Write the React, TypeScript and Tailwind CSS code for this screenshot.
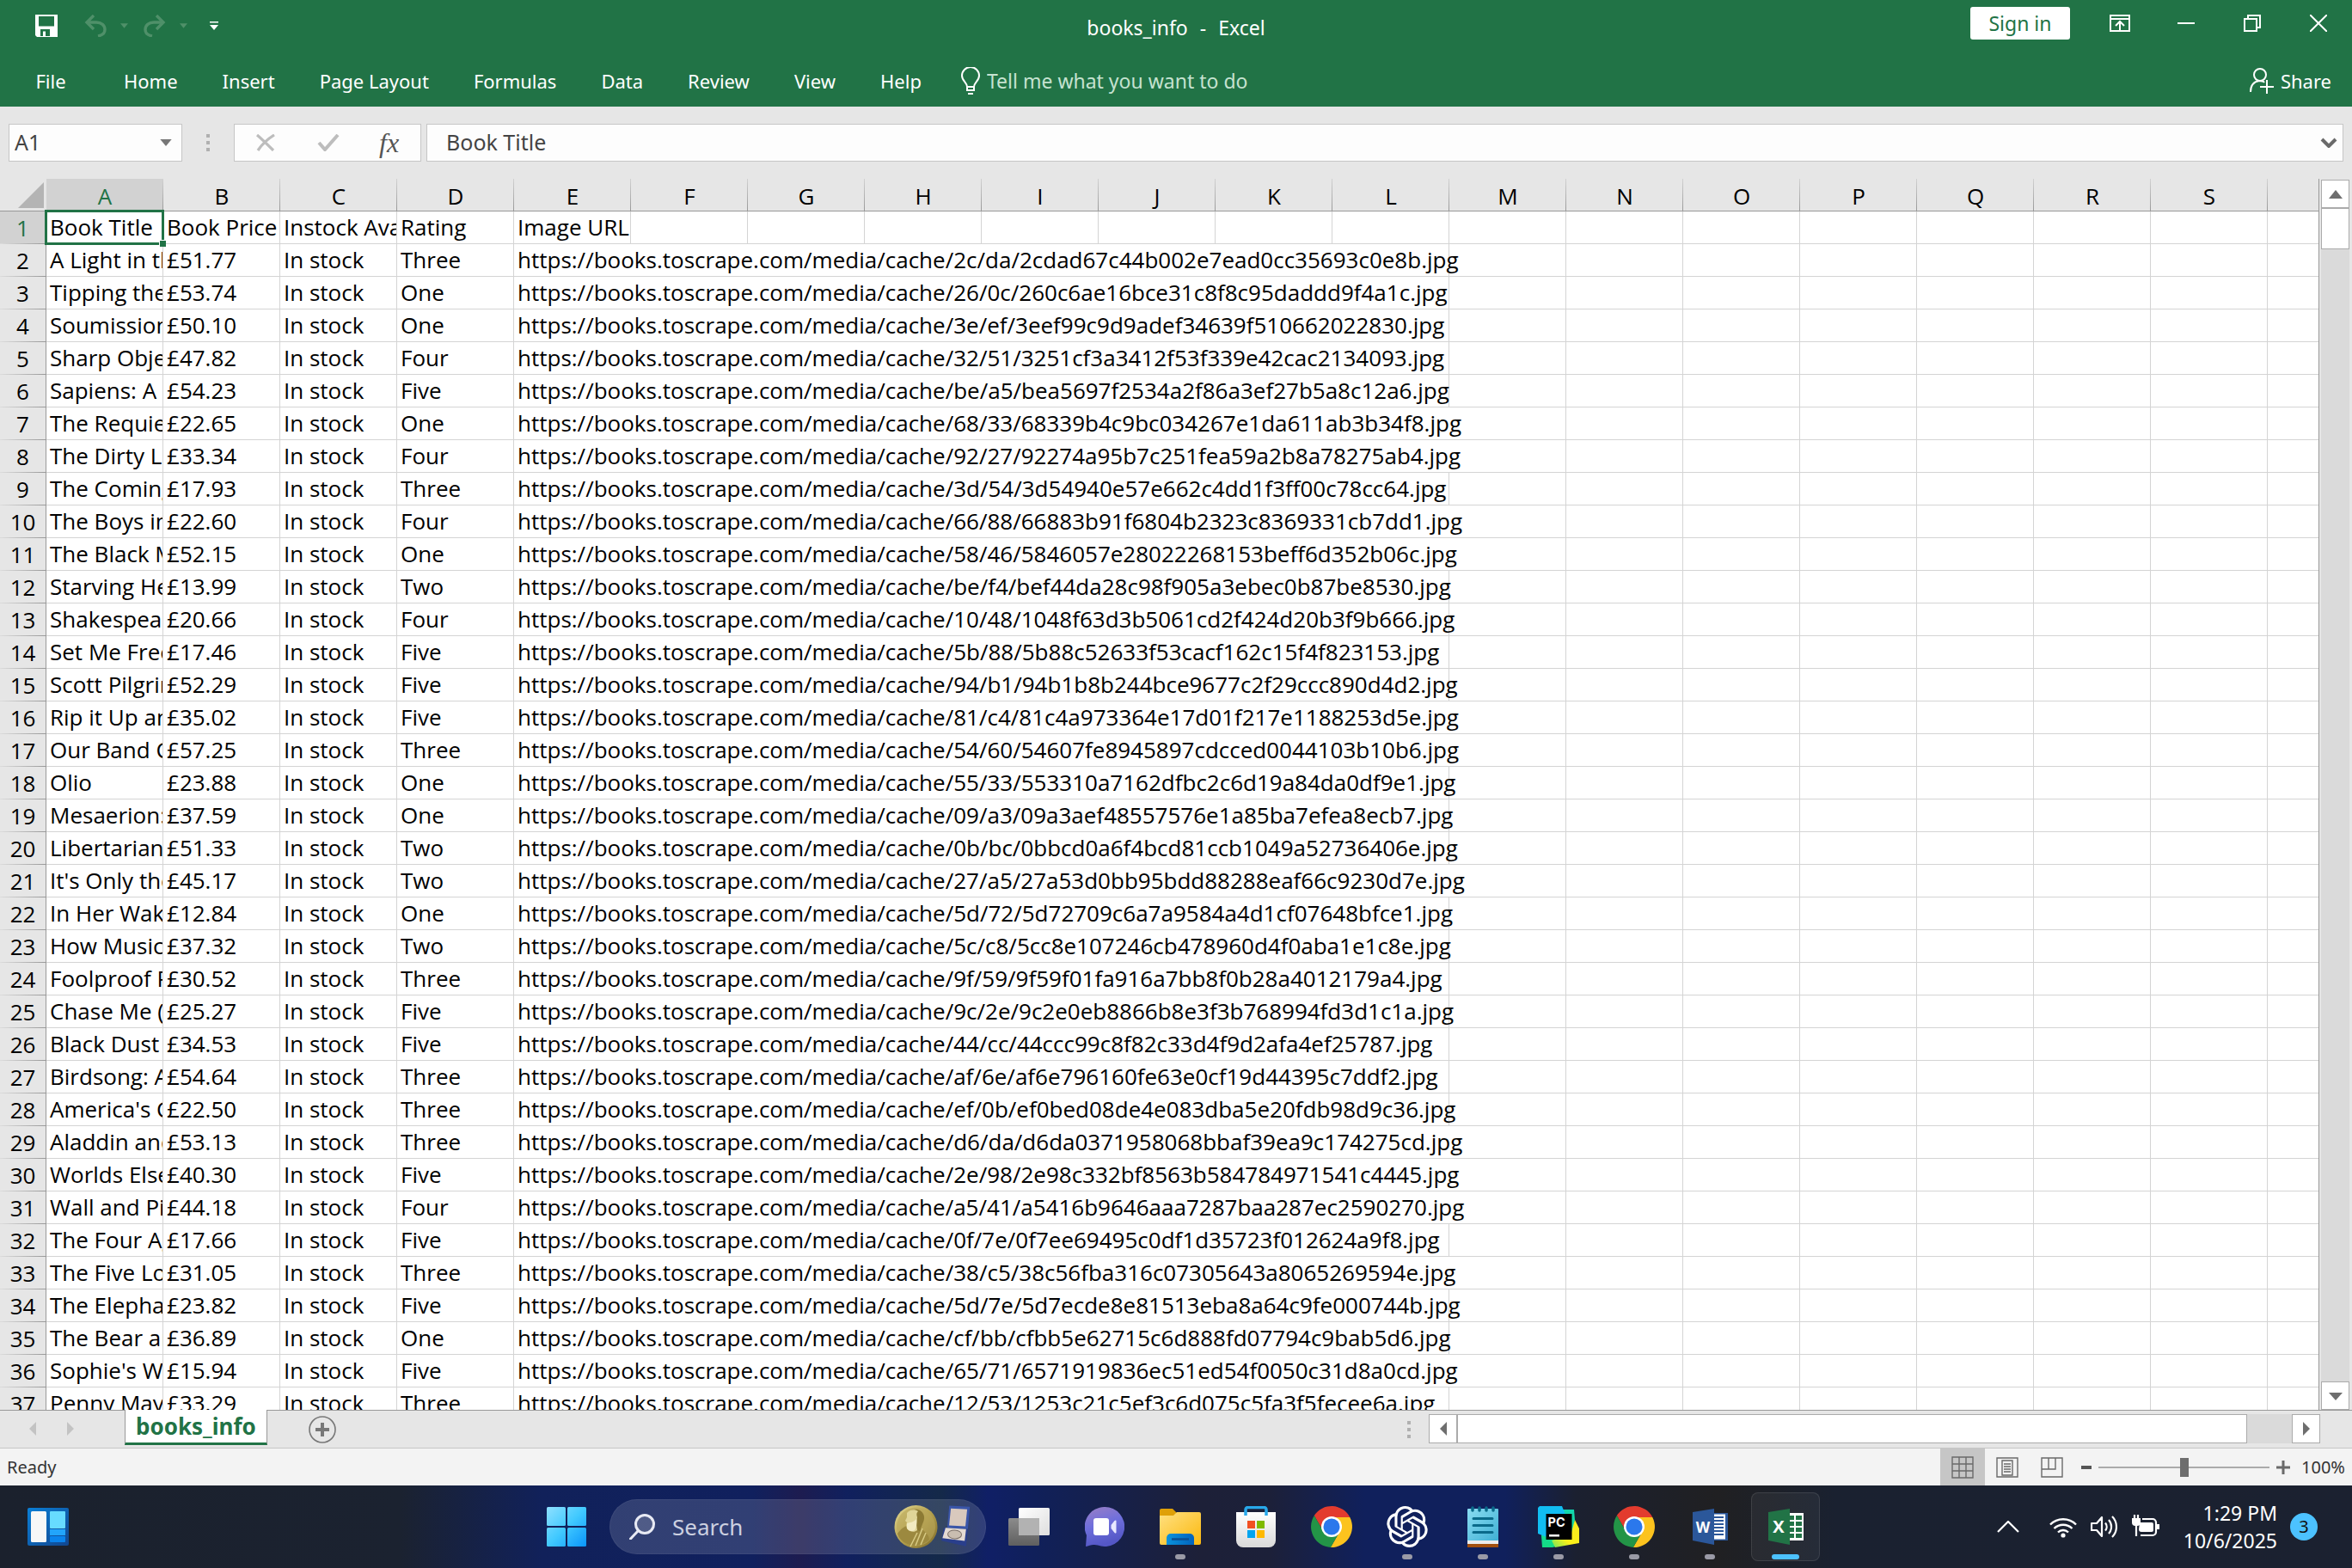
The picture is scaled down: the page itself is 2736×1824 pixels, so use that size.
import type { ReactNode } from "react";
import { SiOpenai } from "react-icons/si";

const UI = "font-['Noto_Sans','Open_Sans',sans-serif]";
const SHEET = "font-['Open_Sans','Noto_Sans',sans-serif]";

const menuTabs = ["Home", "Insert", "Page Layout", "Formulas", "Data", "Review", "View", "Help"];
const columns = "ABCDEFGHIJKLMNOPQRS".split("");
const TOTAL_COLUMNS = columns.length + 1;

type Book = { title: string; price: string; rating: string; image: string; span: number };

const book = (title: string, price: string, rating: string, image: string, span = 8): Book => ({
  title,
  price,
  rating,
  image,
  span,
});

const books: Book[] = [
  book("A Light in the", "51.77", "Three", "2c/da/2cdad67c44b002e7ead0cc35693c0e8b"),
  book("Tipping the", "53.74", "One", "26/0c/260c6ae16bce31c8f8c95daddd9f4a1c"),
  book("Soumission", "50.10", "One", "3e/ef/3eef99c9d9adef34639f510662022830"),
  book("Sharp Objects", "47.82", "Four", "32/51/3251cf3a3412f53f339e42cac2134093"),
  book("Sapiens: A Brief", "54.23", "Five", "be/a5/bea5697f2534a2f86a3ef27b5a8c12a6"),
  book("The Requiem", "22.65", "One", "68/33/68339b4c9bc034267e1da611ab3b34f8", 9),
  book("The Dirty Little", "33.34", "Four", "92/27/92274a95b7c251fea59a2b8a78275ab4", 9),
  book("The Coming", "17.93", "Three", "3d/54/3d54940e57e662c4dd1f3ff00c78cc64"),
  book("The Boys in", "22.60", "Four", "66/88/66883b91f6804b2323c8369331cb7dd1", 9),
  book("The Black Maria", "52.15", "One", "58/46/5846057e28022268153beff6d352b06c", 9),
  book("Starving Hearts", "13.99", "Two", "be/f4/bef44da28c98f905a3ebec0b87be8530"),
  book("Shakespeare's", "20.66", "Four", "10/48/1048f63d3b5061cd2f424d20b3f9b666"),
  book("Set Me Free", "17.46", "Five", "5b/88/5b88c52633f53cacf162c15f4f823153"),
  book("Scott Pilgrim's", "52.29", "Five", "94/b1/94b1b8b244bce9677c2f29ccc890d4d2"),
  book("Rip it Up and", "35.02", "Five", "81/c4/81c4a973364e17d01f217e1188253d5e", 9),
  book("Our Band Could", "57.25", "Three", "54/60/54607fe8945897cdcced0044103b10b6", 9),
  book("Olio", "23.88", "One", "55/33/553310a7162dfbc2c6d19a84da0df9e1"),
  book("Mesaerion:", "37.59", "One", "09/a3/09a3aef48557576e1a85ba7efea8ecb7"),
  book("Libertarianism", "51.33", "Two", "0b/bc/0bbcd0a6f4bcd81ccb1049a52736406e"),
  book("It's Only the", "45.17", "Two", "27/a5/27a53d0bb95bdd88288eaf66c9230d7e", 9),
  book("In Her Wake", "12.84", "One", "5d/72/5d72709c6a7a9584a4d1cf07648bfce1"),
  book("How Music", "37.32", "Two", "5c/c8/5cc8e107246cb478960d4f0aba1e1c8e"),
  book("Foolproof Preserving", "30.52", "Three", "9f/59/9f59f01fa916a7bb8f0b28a4012179a4"),
  book("Chase Me (Paris", "25.27", "Five", "9c/2e/9c2e0eb8866b8e3f3b768994fd3d1c1a"),
  book("Black Dust", "34.53", "Five", "44/cc/44ccc99c8f82c33d4f9d2afa4ef25787"),
  book("Birdsong: A", "54.64", "Three", "af/6e/af6e796160fe63e0cf19d44395c7ddf2"),
  book("America's Cradle", "22.50", "Three", "ef/0b/ef0bed08de4e083dba5e20fdb98d9c36"),
  book("Aladdin and", "53.13", "Three", "d6/da/d6da0371958068bbaf39ea9c174275cd", 9),
  book("Worlds Elsewhere", "40.30", "Five", "2e/98/2e98c332bf8563b584784971541c4445", 9),
  book("Wall and Piece", "44.18", "Four", "a5/41/a5416b9646aaa7287baa287ec2590270", 9),
  book("The Four Agreements", "17.66", "Five", "0f/7e/0f7ee69495c0df1d35723f012624a9f8"),
  book("The Five Love", "31.05", "Three", "38/c5/38c56fba316c07305643a8065269594e", 9),
  book("The Elephant", "23.82", "Five", "5d/7e/5d7ecde8e81513eba8a64c9fe000744b"),
  book("The Bear and", "36.89", "One", "cf/bb/cfbb5e62715c6d888fd07794c9bab5d6"),
  book("Sophie's World", "15.94", "Five", "65/71/6571919836ec51ed54f0050c31d8a0cd", 9),
  book("Penny Maybe", "33.29", "Three", "12/53/1253c21c5ef3c6d075c5fa3f5fecee6a"),
];

/* ---------- Title bar and ribbon ---------- */

function CaretDown({ className }: { className: string }) {
  return (
    <svg viewBox="0 0 10 6" className={className} fill="currentColor" aria-hidden="true">
      <path d="M0 0h10L5 6z" />
    </svg>
  );
}

function UndoShape({ className }: { className: string }) {
  return (
    <svg viewBox="0 0 26 26" className={className} fill="none" stroke="currentColor" strokeWidth="3.4" aria-hidden="true">
      <path d="M11 1 3 9l8 8" />
      <path d="M3 9h11c6 0 10 3.500 10 8.500 0 4-3 6.500-8 7.500" />
    </svg>
  );
}

function TitleBar() {
  return (
    <div className="grid h-16 grid-cols-[1fr_auto_1fr]">
      <div className="flex h-15 items-center pl-[41px] text-white">
        <button aria-label="Save">
          <svg viewBox="0 0 26 26" className="size-[26px]" aria-hidden="true">
            <path fill="#fff" fillRule="evenodd" d="M0 0h26v26H2l-2-2zM4 2v11.500h18V2zM6 17v8h3v-5.500h3V25h5v-8z" />
          </svg>
        </button>
        <button aria-label="Undo" disabled className="ml-[31px] text-[#4f9069]">
          <UndoShape className="size-[26px]" />
        </button>
        <button aria-label="Undo history" disabled className="ml-4 text-[#4f9069]">
          <CaretDown className="h-[6px] w-[9px]" />
        </button>
        <button aria-label="Redo" disabled className="ml-[18px] text-[#4f9069]">
          <UndoShape className="size-[26px] -scale-x-100" />
        </button>
        <button aria-label="Redo history" disabled className="ml-4 text-[#4f9069]">
          <CaretDown className="h-[6px] w-[9px]" />
        </button>
        <button aria-label="Customize Quick Access Toolbar" className="ml-[26px]">
          <svg viewBox="0 0 10 10" className="size-[10px]" fill="currentColor" aria-hidden="true">
            <path d="M0 0h10v1.500H0zM0 4h10L5 10z" />
          </svg>
        </button>
      </div>
      <h1 className="flex items-center gap-[14px] text-[23px] text-white">
        <span>books_info</span>
        <span>-</span>
        <span>Excel</span>
      </h1>
      <div className="flex h-[54px] items-center justify-end pr-[29px] text-white">
        <button className="h-[38px] w-[116px] rounded-[3px] bg-white text-[23px] text-[#217346]">Sign in</button>
        <button aria-label="Ribbon Display Options" className="ml-[46px]">
          <svg viewBox="0 0 24 20" className="h-5 w-6" fill="none" stroke="currentColor" strokeWidth="2" aria-hidden="true">
            <path d="M1 1h22v18H1zM1 5h22M12 19V8M7 13l5-5 5 5" />
          </svg>
        </button>
        <button aria-label="Minimize" className="ml-[55px]">
          <svg viewBox="0 0 20 20" className="size-5" stroke="currentColor" strokeWidth="2" aria-hidden="true">
            <path d="M0 10h20" />
          </svg>
        </button>
        <button aria-label="Restore" className="ml-[57px]">
          <svg viewBox="0 0 20 20" className="size-5" fill="none" stroke="currentColor" strokeWidth="2" aria-hidden="true">
            <path d="M1 5h14v14H1zM5 5V1h14v14h-4" />
          </svg>
        </button>
        <button aria-label="Close" className="ml-[57px]">
          <svg viewBox="0 0 20 20" className="size-5" stroke="currentColor" strokeWidth="2" aria-hidden="true">
            <path d="M0 0l20 20M20 0L0 20" />
          </svg>
        </button>
      </div>
    </div>
  );
}

function MenuBar() {
  return (
    <nav className="flex h-15 items-center text-[22px] text-white">
      <button className="h-full w-[118px]">File</button>
      {menuTabs.map((tab) => (
        <button key={tab} className="h-full px-[26px]">
          {tab}
        </button>
      ))}
      <label className="ml-5 flex flex-1 items-center gap-2">
        <svg viewBox="0 0 22 32" className="h-8 w-[22px]" fill="none" stroke="#fff" strokeWidth="2" aria-hidden="true">
          <path d="M7 23c0-5-6-7-6-13a10 10 0 0 1 20 0c0 6-6 8-6 13zM7 23v4h8v-4M8 31h6" />
        </svg>
        <input
          aria-label="Tell me what you want to do"
          placeholder="Tell me what you want to do"
          className="w-[400px] bg-transparent text-[23px] outline-none placeholder:text-[#c5e2d0]"
        />
      </label>
      <button className="mr-6 flex items-center gap-2">
        <svg viewBox="0 0 28 30" className="h-[30px] w-7" fill="none" stroke="currentColor" strokeWidth="2" aria-hidden="true">
          <ellipse cx="12" cy="8" rx="7" ry="7" />
          <path d="M1 28c0-8 4-12 10-13 3 0 5 .5 6 2M20 14v16M12 22h16" />
        </svg>
        Share
      </button>
    </nav>
  );
}

/* ---------- Formula bar ---------- */

function Grip() {
  return (
    <div className="flex flex-col gap-1" aria-hidden="true">
      <span className="size-1 bg-[#b0b0b0]" />
      <span className="size-1 bg-[#b0b0b0]" />
      <span className="size-1 bg-[#b0b0b0]" />
    </div>
  );
}

function FormulaBar() {
  return (
    <div className="flex h-21 items-center pr-[10px] pb-px pl-[10px] text-[#444]">
      <div className="flex h-11 w-[202px] items-center border border-[#c6c6c6] bg-[#fdfdfd] pr-[11px]">
        <input aria-label="Name box" defaultValue="A1" className="w-full min-w-0 bg-transparent pl-[6px] text-[25px] outline-none" />
        <button aria-label="Open name list">
          <CaretDown className="h-2 w-[14px] text-[#777]" />
        </button>
      </div>
      <div className="ml-7">
        <Grip />
      </div>
      <div className="ml-7 flex h-11 w-[218px] items-center border border-[#c6c6c6] bg-[#fdfdfd] pl-6">
        <button aria-label="Cancel" disabled>
          <svg viewBox="0 0 24 20" className="h-5 w-6" fill="none" stroke="#bdbdbd" strokeWidth="3.200" aria-hidden="true">
            <path d="M2 1c6 5 13 12 19 18M22 1C14 6 7 13 3 19" />
          </svg>
        </button>
        <button aria-label="Enter" disabled className="ml-12">
          <svg viewBox="0 0 26 20" className="h-5 w-[26px]" fill="none" stroke="#bdbdbd" strokeWidth="4" aria-hidden="true">
            <path d="M2 10l7 8L24 1" />
          </svg>
        </button>
        <button aria-label="Insert function" className="ml-[46px] font-['Liberation_Serif',serif] text-[32px] leading-8 text-[#555] italic">
          fx
        </button>
      </div>
      <div className="ml-[6px] flex h-11 flex-1 items-center border border-[#c6c6c6] bg-[#fdfdfd] pr-[6px]">
        <input
          aria-label="Formula"
          defaultValue="Book Title"
          className="w-full min-w-0 bg-transparent pl-[22px] text-[25px] outline-none"
        />
        <button aria-label="Expand formula bar">
          <svg viewBox="0 0 20 12" className="h-3 w-5" fill="none" stroke="#6a6a6a" strokeWidth="4" aria-hidden="true">
            <path d="M2 2l8 8 8-8" />
          </svg>
        </button>
      </div>
    </div>
  );
}

/* ---------- Worksheet ---------- */

function Cell({
  children,
  span = 1,
  last = false,
  spill = false,
}: {
  children?: ReactNode;
  span?: number;
  last?: boolean;
  spill?: boolean;
}) {
  return (
    <td colSpan={span} className={`border-b border-[#d4d4d4] p-0 ${last ? "" : "border-r"}`}>
      <div className={`h-[37px] pl-1 leading-[37px] whitespace-nowrap ${spill ? "" : "overflow-hidden"}`}>{children}</div>
    </td>
  );
}

function RowHeader({ row, selected = false }: { row: number; selected?: boolean }) {
  return (
    <th
      scope="row"
      className={`h-[38px] border-r border-[#999] bg-[linear-gradient(to_right,#dcdcdc,#999)] bg-[length:100%_1px] bg-bottom bg-no-repeat p-0 text-center leading-[37px] font-normal ${
        selected ? "bg-[#d2d2d2] text-[#217346]" : "bg-[#e6e6e6]"
      }`}
    >
      {row}
    </th>
  );
}

function EmptyCells({ from }: { from: number }) {
  return (
    <>
      {Array.from({ length: TOTAL_COLUMNS - from }, (_, i) => (
        <Cell key={i} last={from + i === TOTAL_COLUMNS - 1} />
      ))}
    </>
  );
}

function Worksheet() {
  return (
    <div className="min-h-0 flex-1 overflow-hidden border-r border-[#999] bg-white">
      <table className={`w-full table-fixed border-separate border-spacing-0 text-[26px] text-black ${SHEET}`}>
        <colgroup>
          <col className="w-[54px]" />
          {columns.map((c) => (
            <col key={c} className="w-[136px]" />
          ))}
          <col />
        </colgroup>
        <thead>
          <tr className="h-[38px] bg-[#e6e6e6]">
            <th className="border-b border-[#999] p-0">
              <button aria-label="Select all" className="ml-auto block pr-[3px]">
                <svg viewBox="0 0 30 30" className="size-[30px]" aria-hidden="true">
                  <path d="M30 0v30H0z" fill="#b4b4b4" />
                </svg>
              </button>
            </th>
            {columns.map((c) => (
              <th
                key={c}
                scope="col"
                className={`border-b border-[#999] bg-[linear-gradient(#d0d0d0,#999)] bg-[length:1px_100%] bg-right bg-no-repeat px-0 pt-1 pb-0 leading-[33px] font-normal ${
                  c === "A" ? "bg-[#d2d2d2] text-[#217346]" : ""
                }`}
              >
                {c}
              </th>
            ))}
            <th className="border-b border-[#999] p-0" />
          </tr>
        </thead>
        <tbody>
          <tr>
            <RowHeader row={1} selected />
            <td className="relative border-r border-b border-[#d4d4d4] p-0">
              <div className="h-[37px] overflow-hidden pl-1 leading-[37px] whitespace-nowrap">Book Title</div>
              <div className="pointer-events-none absolute -inset-[2px] border-3 border-[#217346]" />
              <div className="absolute -right-1 -bottom-1 size-2 border-t border-l border-white bg-[#217346]" />
            </td>
            <Cell>Book Price</Cell>
            <Cell>Instock Availability</Cell>
            <Cell>Rating</Cell>
            <Cell>Image URL</Cell>
            <EmptyCells from={5} />
          </tr>
          {books.map((b, i) => (
            <tr key={b.image}>
              <RowHeader row={i + 2} />
              <Cell>{b.title}</Cell>
              <Cell>£{b.price}</Cell>
              <Cell>In stock</Cell>
              <Cell>{b.rating}</Cell>
              <Cell span={b.span} spill>
                https://books.toscrape.com/media/cache/{b.image}.jpg
              </Cell>
              <EmptyCells from={4 + b.span} />
            </tr>
          ))}
        </tbody>
      </table>
    </div>
  );
}

function Arrow({ d, className }: { d: string; className: string }) {
  return (
    <svg viewBox="0 0 16 16" className={className} fill="currentColor" aria-hidden="true">
      <path d={d} />
    </svg>
  );
}

const LEFT = "M12 0v16L4 8z";
const RIGHT = "M4 0v16l8-8z";

function VerticalScrollbar() {
  return (
    <div className="flex w-[38px] flex-col pt-px pr-[3px] pl-[2px] text-[#6e6e6e]">
      <button aria-label="Scroll up" className="flex h-[33px] items-center justify-center border border-[#ababab] bg-white">
        <Arrow d="M0 13h16L8 3z" className="size-4" />
      </button>
      <div className="flex-1 bg-[#dadada]">
        <div className="h-12 border border-[#ababab] bg-white" />
      </div>
      <button aria-label="Scroll down" className="flex h-[33px] items-center justify-center border border-[#ababab] bg-white">
        <Arrow d="M0 4h16l-8 9z" className="size-4" />
      </button>
    </div>
  );
}

function SheetTabs() {
  return (
    <div className="flex h-11 border-t border-[#999]">
      <div className="flex w-[145px] items-center gap-7 pb-[2px] pl-[30px] text-[#c3c3c3]">
        <button aria-label="Previous sheet">
          <Arrow d={LEFT} className="size-4" />
        </button>
        <button aria-label="Next sheet">
          <Arrow d={RIGHT} className="size-4" />
        </button>
      </div>
      <button className="z-10 -mt-px h-[41px] border-x border-b-3 border-x-[#999] border-b-[#217346] bg-white px-3 text-[26px] leading-8 font-bold text-[#217346]">
        books_info
      </button>
      <button aria-label="New sheet" className="mt-[6px] ml-12 size-8">
        <svg viewBox="0 0 32 32" className="size-8" fill="none" stroke="#777" aria-hidden="true">
          <circle cx="16" cy="16" r="15" strokeWidth="1.600" />
          <path d="M16 8v16M8 16h16" strokeWidth="4" />
        </svg>
      </button>
      <div className="flex-1" />
      <div className="mt-3 mr-[21px] w-1">
        <Grip />
      </div>
      <div className="mt-1 mr-[37px] flex h-[34px] w-[39%] max-w-[1037px] shrink-0 text-[#6e6e6e]">
        <button aria-label="Scroll left" className="flex w-[33px] items-center justify-center border border-[#ababab] bg-white">
          <Arrow d={LEFT} className="size-4" />
        </button>
        <div className="flex-1 bg-[#dadada] pr-[52px]">
          <div className="h-full border border-[#ababab] bg-white" />
        </div>
        <button aria-label="Scroll right" className="flex w-[33px] items-center justify-center border border-[#ababab] bg-white">
          <Arrow d={RIGHT} className="size-4" />
        </button>
      </div>
    </div>
  );
}

function StatusBar() {
  return (
    <div className="flex h-11 items-center border-t border-[#c6c6c6] bg-[#f3f3f3] text-[20px] text-[#333]">
      <span className="flex-1 pl-2">Ready</span>
      <button aria-label="Normal view" className="flex h-full w-[52px] items-center justify-center bg-[#c6c6c6]">
        <svg viewBox="0 0 26 26" className="size-[26px]" fill="none" stroke="#6a6a6a" strokeWidth="1.400" aria-hidden="true">
          <path d="M1 1h24v24H1zM1 9h24M1 17h24M9 1v24M17 1v24" />
        </svg>
      </button>
      <button aria-label="Page layout view" className="flex h-full w-[52px] items-center justify-center">
        <svg viewBox="0 0 26 24" className="h-6 w-[26px]" fill="none" stroke="#6a6a6a" strokeWidth="1.400" aria-hidden="true">
          <path d="M1 1h24v22H1zM7 4h12v17H7zM9 8h8M9 11h8M9 14h8M9 17h8" />
        </svg>
      </button>
      <button aria-label="Page break preview" className="flex h-full w-[52px] items-center justify-center">
        <svg viewBox="0 0 26 24" className="h-6 w-[26px]" fill="none" stroke="#6a6a6a" strokeWidth="1.400" aria-hidden="true">
          <path d="M1 1h24v22H1zM1 14h16V1M9 1v13" />
        </svg>
      </button>
      <button aria-label="Zoom out" className="ml-2">
        <svg viewBox="0 0 12 12" className="size-3" aria-hidden="true">
          <path d="M0 4h12v4H0z" fill="#555" />
        </svg>
      </button>
      <input
        type="range"
        aria-label="Zoom"
        min={0}
        max={200}
        defaultValue={100}
        className="mx-2 h-[22px] w-[199px] appearance-none bg-[linear-gradient(#ababab,#ababab)] bg-[length:100%_2px] bg-center bg-no-repeat [&::-webkit-slider-thumb]:h-[22px] [&::-webkit-slider-thumb]:w-[10px] [&::-webkit-slider-thumb]:appearance-none [&::-webkit-slider-thumb]:bg-[#6e6e6e]"
      />
      <button aria-label="Zoom in">
        <svg viewBox="0 0 16 16" className="size-4" stroke="#6a6a6a" strokeWidth="3" aria-hidden="true">
          <path d="M8 0v16M0 8h16" />
        </svg>
      </button>
      <span className="w-[72px] pr-2 text-right">100%</span>
    </div>
  );
}

/* ---------- Taskbar ---------- */

function WidgetsIcon() {
  return (
    <svg viewBox="0 0 48 44" className="h-11 w-12" aria-hidden="true">
      <defs>
        <linearGradient id="wg" x1="0" y1="0" x2="1" y2="1">
          <stop offset="0" stopColor="#0a7fd6" />
          <stop offset="1" stopColor="#12468f" />
        </linearGradient>
      </defs>
      <rect width="48" height="44" rx="2" fill="url(#wg)" />
      <rect x="4" y="4" width="18" height="36" rx="1.500" fill="#f7f7f7" />
      <rect x="26" y="4" width="18" height="20" rx="1" fill="#67dbff" />
      <rect x="26" y="25" width="18" height="7" fill="#22a5fb" />
      <rect x="26" y="33" width="18" height="7" rx="1" fill="#0a84ec" />
    </svg>
  );
}

function StartIcon() {
  return (
    <svg viewBox="0 0 46 46" className="size-[46px]" aria-hidden="true">
      <defs>
        <linearGradient id="st" gradientUnits="userSpaceOnUse" x1="0" y1="0" x2="46" y2="46">
          <stop offset="0" stopColor="#8fe0ff" />
          <stop offset="0.5" stopColor="#41c9ff" />
          <stop offset="1" stopColor="#0a95fb" />
        </linearGradient>
      </defs>
      <g fill="url(#st)">
        <rect width="22" height="22" rx="1.500" />
        <rect x="24" width="22" height="22" rx="1.500" />
        <rect y="24" width="22" height="22" rx="1.500" />
        <rect x="24" y="24" width="22" height="22" rx="1.500" />
      </g>
    </svg>
  );
}

function MedalIcon() {
  return (
    <svg viewBox="0 0 90 52" className="h-[52px] w-[90px]" aria-hidden="true">
      <defs>
        <linearGradient id="md" x1="0" y1="0" x2="1" y2="1">
          <stop offset="0" stopColor="#e6dc96" />
          <stop offset="0.5" stopColor="#b5a14e" />
          <stop offset="1" stopColor="#7d6a28" />
        </linearGradient>
      </defs>
      <circle cx="25.500" cy="26" r="25" fill="url(#md)" />
      <circle cx="25.500" cy="26" r="22.500" fill="#b9a65a" fillOpacity="0.600" />
      <path d="M4 34c4-6 9-9 14-10l4-2 13 9c4 3 6 7 6 10-9 9-25 9-33 0-2-2-3-4-4-7z" fill="#9c893f" />
      <path d="M17 9c5-5 14-4 17 2 2 4 1 8-1 12l-3 8-8-3-2-9z" fill="#8c7a34" />
      <path d="M15 10c3-4 9-5 13-2-2 2-2 4-1 7l-1 8 1 7c-3 3-9 2-11-1-2-2-2-5-1-8l-2-2 2-4z" fill="#e0d598" />
      <path d="M15 22c3-1 8-1 11-5 1 5 0 10-2 13-3 2-7 1-9-2z" fill="#f2ebc2" />
      <path d="M27 33 19 49M33 28l-8 20M37 33l-6 14" stroke="#d8cb84" strokeWidth="1.500" />
      <g transform="rotate(3 72 26)">
        <path d="M63 2h24l-1 26H62z" fill="#3a55a8" />
        <path d="M65 5h19l-1 20H64z" fill="#d9c9bd" />
        <path d="M58 28h28l-1 20-29-5z" fill="#2a3f8c" />
        <path d="M60 28h24l-1 14-26-2z" fill="#e4dad2" />
        <ellipse cx="71" cy="35" rx="8" ry="5" fill="#c9bdb0" stroke="#7a6f68" />
      </g>
    </svg>
  );
}

function TaskViewIcon() {
  return (
    <svg viewBox="0 0 48 44" className="h-11 w-12" aria-hidden="true">
      <defs>
        <linearGradient id="tv1" x1="0" y1="0" x2="1" y2="1">
          <stop offset="0" stopColor="#fff" />
          <stop offset="1" stopColor="#dedede" />
        </linearGradient>
        <linearGradient id="tv2" x1="0" y1="0" x2="0" y2="1">
          <stop offset="0" stopColor="#8c8c8c" />
          <stop offset="1" stopColor="#5f5f5f" />
        </linearGradient>
      </defs>
      <rect y="12" width="36" height="32" rx="1.500" fill="url(#tv2)" />
      <rect x="12" width="36" height="32" rx="1.500" fill="url(#tv1)" />
      <path d="M12 12h24v20H12z" fill="#b2b2b2" />
    </svg>
  );
}

function ChatIcon() {
  return (
    <svg viewBox="0 0 46 46" className="size-[46px]" aria-hidden="true">
      <defs>
        <linearGradient id="ch" x1="0" y1="0" x2="0.300" y2="1">
          <stop offset="0" stopColor="#9b7fc4" />
          <stop offset="0.500" stopColor="#6f6fdc" />
          <stop offset="1" stopColor="#5457c6" />
        </linearGradient>
      </defs>
      <path d="M23 0a23 23 0 1 1-8 44.500C10 43 6 45 1 46l1-13A23 23 0 0 1 23 0z" fill="url(#ch)" />
      <rect x="10" y="13" width="18" height="20" rx="3" fill="#fff" />
      <path d="M30.500 21l4-5c1-1 2-.5 2 .5v13c0 1-1 1.500-2 .5l-4-5z" fill="#e8e8ff" />
    </svg>
  );
}

function ExplorerIcon() {
  return (
    <svg viewBox="0 0 48 42" className="h-[42px] w-12" aria-hidden="true">
      <defs>
        <linearGradient id="ex1" x1="0" y1="0" x2="1" y2="1">
          <stop offset="0" stopColor="#ffe082" />
          <stop offset="1" stopColor="#fbb90e" />
        </linearGradient>
        <linearGradient id="ex2" x1="0" y1="0" x2="1" y2="0">
          <stop offset="0" stopColor="#0a93dd" />
          <stop offset="1" stopColor="#0263bd" />
        </linearGradient>
      </defs>
      <path d="M2 0h13l5 5v6H0V2a2 2 0 0 1 2-2z" fill="#dfa008" />
      <path d="M0 8h16l4-4h26a2 2 0 0 1 2 2v34a2 2 0 0 1-2 2H2a2 2 0 0 1-2-2z" fill="url(#ex1)" />
      <path d="M8 42V34a5 5 0 0 1 5-5h22a5 5 0 0 1 5 5v8z" fill="url(#ex2)" />
      <path d="M14 35.500h20" stroke="#0a4f94" strokeWidth="2.500" />
    </svg>
  );
}

function StoreIcon() {
  return (
    <svg viewBox="0 0 46 48" className="h-12 w-[46px]" aria-hidden="true">
      <defs>
        <linearGradient id="so" x1="0" y1="0" x2="0" y2="1">
          <stop offset="0" stopColor="#fff" />
          <stop offset="1" stopColor="#d9d9d9" />
        </linearGradient>
      </defs>
      <path d="M0 7h46v33a8 8 0 0 1-8 8H8a8 8 0 0 1-8-8z" fill="url(#so)" />
      <path d="M11 11V4a2.500 2.500 0 0 1 2.500-2.500h19A2.500 2.500 0 0 1 35 4v7" fill="none" stroke="#28a8ea" strokeWidth="3.500" />
      <path d="M13 17h9v9h-9z" fill="#f25022" />
      <path d="M24 17h9v9h-9z" fill="#7fba00" />
      <path d="M13 28h9v9h-9z" fill="#00a4ef" />
      <path d="M24 28h9v9h-9z" fill="#ffb900" />
    </svg>
  );
}

function ChromeIcon() {
  return (
    <svg viewBox="0 0 48 48" className="size-12" aria-hidden="true">
      <path d="M3.820 11.060A24 24 0 0 1 45.300 13L24 13A11 11 0 0 0 14.470 29.500z" fill="#e33b2e" />
      <path d="M45.300 13A24 24 0 0 1 22.880 47.950L33.530 29.500A11 11 0 0 0 24 13z" fill="#fcc31e" />
      <path d="M22.880 47.950A24 24 0 0 1 3.820 11.060L14.470 29.500A11 11 0 0 0 33.530 29.500z" fill="#239447" />
      <circle cx="24" cy="24" r="12" fill="#fff" />
      <circle cx="24" cy="24" r="9.500" fill="#2b78ec" />
    </svg>
  );
}

function NotepadIcon() {
  return (
    <svg viewBox="0 0 36 48" className="h-12 w-9" aria-hidden="true">
      <defs>
        <linearGradient id="np" x1="0" y1="0" x2="1" y2="1">
          <stop offset="0" stopColor="#8adcf2" />
          <stop offset="1" stopColor="#3fb0d4" />
        </linearGradient>
      </defs>
      <path d="M0 44h36v4H0z" fill="#a3500f" />
      <path d="M0 38h36v6H0z" fill="#ececec" />
      <rect y="3" width="36" height="37" rx="1" fill="url(#np)" />
      <g stroke="#0a6a8a" strokeWidth="3.500" strokeLinecap="round">
        <path d="M6 2v3M14 2v3M22 2v3M30 2v3" />
        <path d="M7 14.500h22M7 22.500h22M7 30.500h22" strokeWidth="3" />
      </g>
    </svg>
  );
}

function PyCharmIcon() {
  return (
    <svg viewBox="0 0 48 48" className="size-12" aria-hidden="true">
      <defs>
        <linearGradient id="py" x1="0" y1="0" x2="0" y2="1">
          <stop offset="0" stopColor="#12d6b0" />
          <stop offset="1" stopColor="#14dc84" />
        </linearGradient>
        <linearGradient id="py2" x1="0" y1="1" x2="1" y2="0">
          <stop offset="0" stopColor="#6fe85a" />
          <stop offset="0.400" stopColor="#fcf019" />
          <stop offset="1" stopColor="#f6ea1f" />
        </linearGradient>
      </defs>
      <path d="M28 4h14l1 12-4 26-22 6H5L4 34z" fill="url(#py)" />
      <path d="M43 16l5 10v17l-28 5-4-8 22-6z" fill="url(#py2)" />
      <path d="M2 0h26l4 10-22 26-10-4V2z" fill="#11bdf2" />
      <path d="M9.500 9h30v30h-30z" fill="#000" />
      <text x="11.500" y="23.500" fontFamily="Inter, Liberation Sans, sans-serif" fontWeight="700" fontSize="14.500" fill="#fff">
        PC
      </text>
      <path d="M13 33h12v2.500H13z" fill="#fff" />
    </svg>
  );
}

function WordIcon() {
  return (
    <svg viewBox="0 0 41 42" className="h-[42px] w-[41px]" aria-hidden="true">
      <path d="M24 5h17v32H24z" fill="#2b579a" />
      <path d="M24 6.500h14v29H24z" fill="#fff" />
      <path d="M24 10h12M24 14h12M24 18h12M24 22h12M24 26h12M24 30h12" stroke="#2b579a" strokeWidth="2" />
      <path d="M0 4l25-4v42L0 37z" fill="#2b579a" />
      <text x="12" y="28" textAnchor="middle" fontFamily="Open Sans, sans-serif" fontWeight="700" fontSize="17" fill="#fff">
        W
      </text>
    </svg>
  );
}

function ExcelIcon() {
  return (
    <svg viewBox="0 0 41 42" className="h-[42px] w-[41px]" aria-hidden="true">
      <path d="M24 5h17v32H24z" fill="#fff" />
      <path d="M24 8h6v5h-6zM32 8h7v5h-7zM24 15h6v5h-6zM32 15h7v5h-7zM24 22h6v5h-6zM32 22h7v5h-7zM24 29h6v5h-6zM32 29h7v5h-7z" fill="#217346" />
      <path d="M0 4l25-4v42L0 37z" fill="#217346" />
      <text x="12" y="28" textAnchor="middle" fontFamily="Open Sans, sans-serif" fontWeight="700" fontSize="20" fill="#fff">
        X
      </text>
    </svg>
  );
}

function TaskButton({ label, state, children }: { label: string; state?: "open" | "active"; children: ReactNode }) {
  return (
    <button
      aria-label={label}
      className={`relative flex size-20 items-center justify-center rounded-lg pb-px ${
        state === "active" ? "border border-white/10 bg-white/5" : ""
      }`}
    >
      {children}
      {state === "open" && <span className="absolute bottom-[2px] h-[6px] w-3 rounded-full bg-[#9a9aa6]" />}
      {state === "active" && <span className="absolute bottom-px h-[6px] w-8 rounded-full bg-[#4cc2ff]" />}
    </button>
  );
}

function Tray() {
  return (
    <div className="flex items-center justify-end pr-10 text-white">
      <button aria-label="Show hidden icons">
        <svg viewBox="0 0 26 14" className="h-[14px] w-[26px]" fill="none" stroke="currentColor" strokeWidth="2.200" aria-hidden="true">
          <path d="M1 13L13 1l12 12" />
        </svg>
      </button>
      <button aria-label="Network, volume and battery" className="ml-[35px] flex items-center gap-4">
        <svg viewBox="0 0 32 26" className="h-[26px] w-8" fill="none" stroke="currentColor" strokeWidth="2.400" aria-hidden="true">
          <path d="M1 10.500a21 21 0 0 1 30 0M5.500 15a15 15 0 0 1 21 0M10 19.500a8.500 8.500 0 0 1 12 0" />
          <circle cx="16" cy="23" r="2.600" fill="currentColor" stroke="none" />
        </svg>
        <svg viewBox="0 0 32 28" className="h-7 w-8" fill="none" stroke="currentColor" strokeWidth="2.200" aria-hidden="true">
          <path d="M1 10h6l6-7v22l-6-7H1z" strokeLinejoin="round" />
          <path d="M17 9.500a7 7 0 0 1 0 9M21 6a12 12 0 0 1 0 16M25 2a17 17 0 0 1 0 24" />
        </svg>
        <svg viewBox="0 0 32 28" className="h-7 w-8" fill="none" stroke="currentColor" strokeWidth="2.200" aria-hidden="true">
          <path d="M12 5h12a4 4 0 0 1 4 4v11a4 4 0 0 1-4 4H10" />
          <path d="M9 9h14a2 2 0 0 1 2 2v7a2 2 0 0 1-2 2H11a3 3 0 0 1-3-3z" fill="currentColor" stroke="none" />
          <path d="M28 11h4v6h-4z" fill="currentColor" stroke="none" />
          <path d="M0 4h10v5a4 4 0 0 1-4 4H4a4 4 0 0 1-4-4z" fill="currentColor" stroke="none" />
          <path d="M3 0v5M7 0v5M5 12v13" />
        </svg>
      </button>
      <button className="ml-6 flex items-center gap-[15px] text-[23px] leading-8">
        <span className="min-w-[113px] text-right">
          <span className="block">1:29 PM</span>
          <span className="block">10/6/2025</span>
        </span>
        <span className="flex size-8 items-center justify-center rounded-full bg-[#4cc2ff] text-[20px] text-[#111]">3</span>
      </button>
    </div>
  );
}

function Taskbar() {
  return (
    <footer className="grid h-24 grid-cols-[1fr_auto_1fr] items-center bg-[linear-gradient(to_right,#1b212d_0%,#1b2230_17%,#11215a_23%,#10205e_32%,#1d1c50_34%,#10205e_36%,#142949_40%,#101f66_42%,#10205a_44%,#1d2038_51%,#1c2039_54%,#10205c_58%,#10205c_64%,#1b2030_67%,#202022_73%,#1a2130_78%,#1b2130_100%)]">
      <div className="pl-4">
        <TaskButton label="Widgets">
          <WidgetsIcon />
        </TaskButton>
      </div>
      <div className="flex items-center gap-2">
        <TaskButton label="Start">
          <StartIcon />
        </TaskButton>
        <label className="mx-[2px] flex h-16 w-[438px] items-center rounded-full border border-white/5 bg-white/14 pr-[16px] pl-[22px]">
          <svg viewBox="0 0 30 30" className="size-[30px] shrink-0" fill="none" stroke="#e8eaf4" strokeWidth="3" aria-hidden="true">
            <circle cx="18" cy="12" r="10.500" fill="#fff" fillOpacity="0.150" />
            <path d="M10.500 19.500L1.500 29" strokeLinecap="round" />
          </svg>
          <input
            aria-label="Search"
            placeholder="Search"
            className="ml-5 w-full min-w-0 bg-transparent text-[26px] outline-none placeholder:text-[#ccd0e0]"
          />
          <span className="shrink-0">
            <MedalIcon />
          </span>
        </label>
        <TaskButton label="Task View">
          <TaskViewIcon />
        </TaskButton>
        <TaskButton label="Chat">
          <ChatIcon />
        </TaskButton>
        <TaskButton label="File Explorer" state="open">
          <ExplorerIcon />
        </TaskButton>
        <TaskButton label="Microsoft Store">
          <StoreIcon />
        </TaskButton>
        <TaskButton label="Google Chrome">
          <ChromeIcon />
        </TaskButton>
        <TaskButton label="ChatGPT" state="open">
          <SiOpenai className="size-12 text-white" />
        </TaskButton>
        <TaskButton label="Notepad" state="open">
          <NotepadIcon />
        </TaskButton>
        <TaskButton label="PyCharm" state="open">
          <PyCharmIcon />
        </TaskButton>
        <TaskButton label="Google Chrome window" state="open">
          <ChromeIcon />
        </TaskButton>
        <TaskButton label="Word" state="open">
          <WordIcon />
        </TaskButton>
        <TaskButton label="Excel" state="active">
          <ExcelIcon />
        </TaskButton>
      </div>
      <Tray />
    </footer>
  );
}

export default function App() {
  return (
    <div className={`flex h-screen flex-col overflow-hidden bg-[#e6e6e6] ${UI}`}>
      <header className="bg-[#217346]">
        <TitleBar />
        <MenuBar />
      </header>
      <FormulaBar />
      <main className="flex min-h-0 flex-1">
        <Worksheet />
        <VerticalScrollbar />
      </main>
      <SheetTabs />
      <StatusBar />
      <Taskbar />
    </div>
  );
}
